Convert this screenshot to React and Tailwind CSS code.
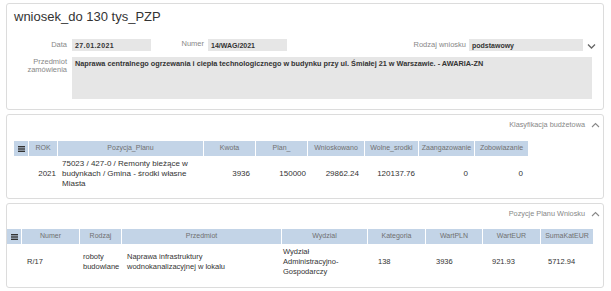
import React from "react";

const Caret = ({ up = false, className = "" }) => (
  <svg width="9" height="6" viewBox="0 0 9 6" className={className}>
    {up ? (
      <polyline points="1,5 4.5,1.5 8,5" fill="none" stroke="#888" strokeWidth="1.1" />
    ) : (
      <polyline points="1,1.5 4.5,5 8,1.5" fill="none" stroke="#666" strokeWidth="1.3" />
    )}
  </svg>
);

const Menu = () => (
  <svg width="7" height="6" viewBox="0 0 7 6">
    <rect x="0" y="0" width="7" height="1.4" fill="#333" />
    <rect x="0" y="2.3" width="7" height="1.4" fill="#333" />
    <rect x="0" y="4.6" width="7" height="1.4" fill="#333" />
  </svg>
);

const H = ({ children, className = "" }) => (
  <div className={"bg-[#c3d4e7] text-[#707070] text-[7px] h-[15px] flex items-center justify-center whitespace-nowrap " + className}>
    {children}
  </div>
);

export default function App() {
  return (
    <div className="w-[611px] h-[291px] bg-white overflow-hidden pt-[3px] pl-[6px] font-['Liberation_Sans',Arial,sans-serif]">
      {/* Panel 1 */}
      <div className="w-[598px] h-[107px] border border-[#dcdcdc] rounded-[3px] pt-[5px]">
        <div className="pl-[7px] text-[13px] leading-[15px] text-[#333]">wniosek_do 130 tys_PZP</div>
        <div className="flex items-start mt-[15px] h-[12px]">
          <div className="w-[60px] text-right text-[7.5px] leading-[9px] text-[#888] pt-[1px]">Data</div>
          <div className="ml-[5px] w-[79px] h-[12px] bg-[#e6e6e6] text-[7px] font-bold text-[#333] pl-[3px] pt-[3px] leading-[8px] tracking-[0.4px]">27.01.2021</div>
          <div className="w-[53px] text-right text-[7.5px] leading-[9px] text-[#888]">Numer</div>
          <div className="ml-[4px] w-[79px] h-[12px] bg-[#e6e6e6] text-[7px] font-bold text-[#333] pl-[3px] pt-[3px] leading-[8px]">14/WAG/2021</div>
          <div className="w-[179px] text-right text-[7.5px] leading-[9px] text-[#888] pt-[1px]">Rodzaj wniosku</div>
          <div className="ml-[3px] w-[114px] h-[12px] bg-[#e6e6e6] text-[7px] font-bold text-[#333] pl-[3px] pt-[3px] leading-[8px]">podstawowy</div>
          <div className="ml-[4px] pt-[4px]"><Caret /></div>
        </div>
        <div className="flex items-start mt-[6px]">
          <div className="w-[60px] text-right text-[7.5px] leading-[8px] text-[#888] pt-[1px]">Przedmiot<br />zamówienia</div>
          <div className="ml-[5px] w-[520px] h-[42px] bg-[#e6e6e6] text-[7.3px] font-bold text-[#333] pl-[3px] pt-[3px] leading-[8px] whitespace-nowrap">
            Naprawa centralnego ogrzewania i ciepła technologicznego w budynku przy ul. Śmiałej 21 w Warszawie. - AWARIA-ZN
          </div>
        </div>
      </div>

      {/* Panel 2 */}
      <div className="mt-[4px] w-[598px] h-[85px] border border-[#dcdcdc] rounded-[3px]">
        <div className="flex justify-end items-center h-[19px] pt-[1px] pr-[3px]">
          <span className="text-[7.3px] text-[#888]">Klasyfikacja budżetowa</span>
          <Caret up className="ml-[6px]" />
        </div>
        <div className="ml-[7px] mt-[7px] grid grid-cols-[14px_28px_145px_51px_51px_56px_53px_55px_53px] gap-x-[1px]">
          <H><Menu /></H>
          <H>ROK</H>
          <H>Pozycja_Planu</H>
          <H>Kwota</H>
          <H>Plan_</H>
          <H>Wnioskowano</H>
          <H>Wolne_srodki</H>
          <H>Zaangazowanie</H>
          <H>Zobowiazanie</H>
          <div />
          <div className="text-[8px] text-[#333] leading-[10px] pt-[13px] text-right pr-[1px]">2021</div>
          <div className="text-[8px] text-[#333] leading-[10px] pt-[3px] pl-[4px] pr-[10px]">75023 / 427-0 / Remonty bieżące w budynkach / Gmina - środki własne Miasta</div>
          <div className="text-[8px] text-[#333] leading-[10px] pt-[13px] text-right pr-[5px]">3936</div>
          <div className="text-[8px] text-[#333] leading-[10px] pt-[13px] text-right pr-[1px]">150000</div>
          <div className="text-[8px] text-[#333] leading-[10px] pt-[13px] text-right pr-[5px]">29862.24</div>
          <div className="text-[8px] text-[#333] leading-[10px] pt-[13px] text-right pr-[3px]">120137.76</div>
          <div className="text-[8px] text-[#333] leading-[10px] pt-[13px] text-right pr-[6px]">0</div>
          <div className="text-[8px] text-[#333] leading-[10px] pt-[13px] text-right pr-[5px]">0</div>
        </div>
      </div>

      {/* Panel 3 */}
      <div className="mt-[4px] w-[598px] h-[85px] border border-[#dcdcdc] rounded-[3px]">
        <div className="flex justify-end items-center h-[19px] pt-[1px] pr-[3px]">
          <span className="text-[7.3px] text-[#888]">Pozycje Planu Wniosku</span>
          <Caret up className="ml-[6px]" />
        </div>
        <div className="mt-[6px] grid grid-cols-[14px_57px_41px_159px_85px_57px_56px_57px_52px] gap-x-[1px]">
          <H><Menu /></H>
          <H>Numer</H>
          <H>Rodzaj</H>
          <H>Przedmiot</H>
          <H>Wydzial</H>
          <H>Kategoria</H>
          <H>WartPLN</H>
          <H>WartEUR</H>
          <H>SumaKatEUR</H>
          <div />
          <div className="text-[7.5px] text-[#333] leading-[10px] pt-[13px] pl-[5px]">R/17</div>
          <div className="text-[7.5px] text-[#333] leading-[10px] pt-[8px] pl-[3px] whitespace-nowrap">roboty<br />budowlane</div>
          <div className="text-[7.5px] text-[#333] leading-[10px] pt-[8px] pl-[5px] whitespace-nowrap">Naprawa infrastruktury<br />wodnokanalizacyjnej w lokalu</div>
          <div className="text-[7.5px] text-[#333] leading-[10px] pt-[3px] pl-[1px] whitespace-nowrap">Wydział<br />Administracyjno-<br />Gospodarczy</div>
          <div className="text-[7.5px] text-[#333] leading-[10px] pt-[13px] pl-[10px]">138</div>
          <div className="text-[7.5px] text-[#333] leading-[10px] pt-[13px] pl-[10px]">3936</div>
          <div className="text-[7.5px] text-[#333] leading-[10px] pt-[13px] pl-[9px]">921.93</div>
          <div className="text-[7.5px] text-[#333] leading-[10px] pt-[13px] pl-[7px]">5712.94</div>
        </div>
      </div>
    </div>
  );
}
